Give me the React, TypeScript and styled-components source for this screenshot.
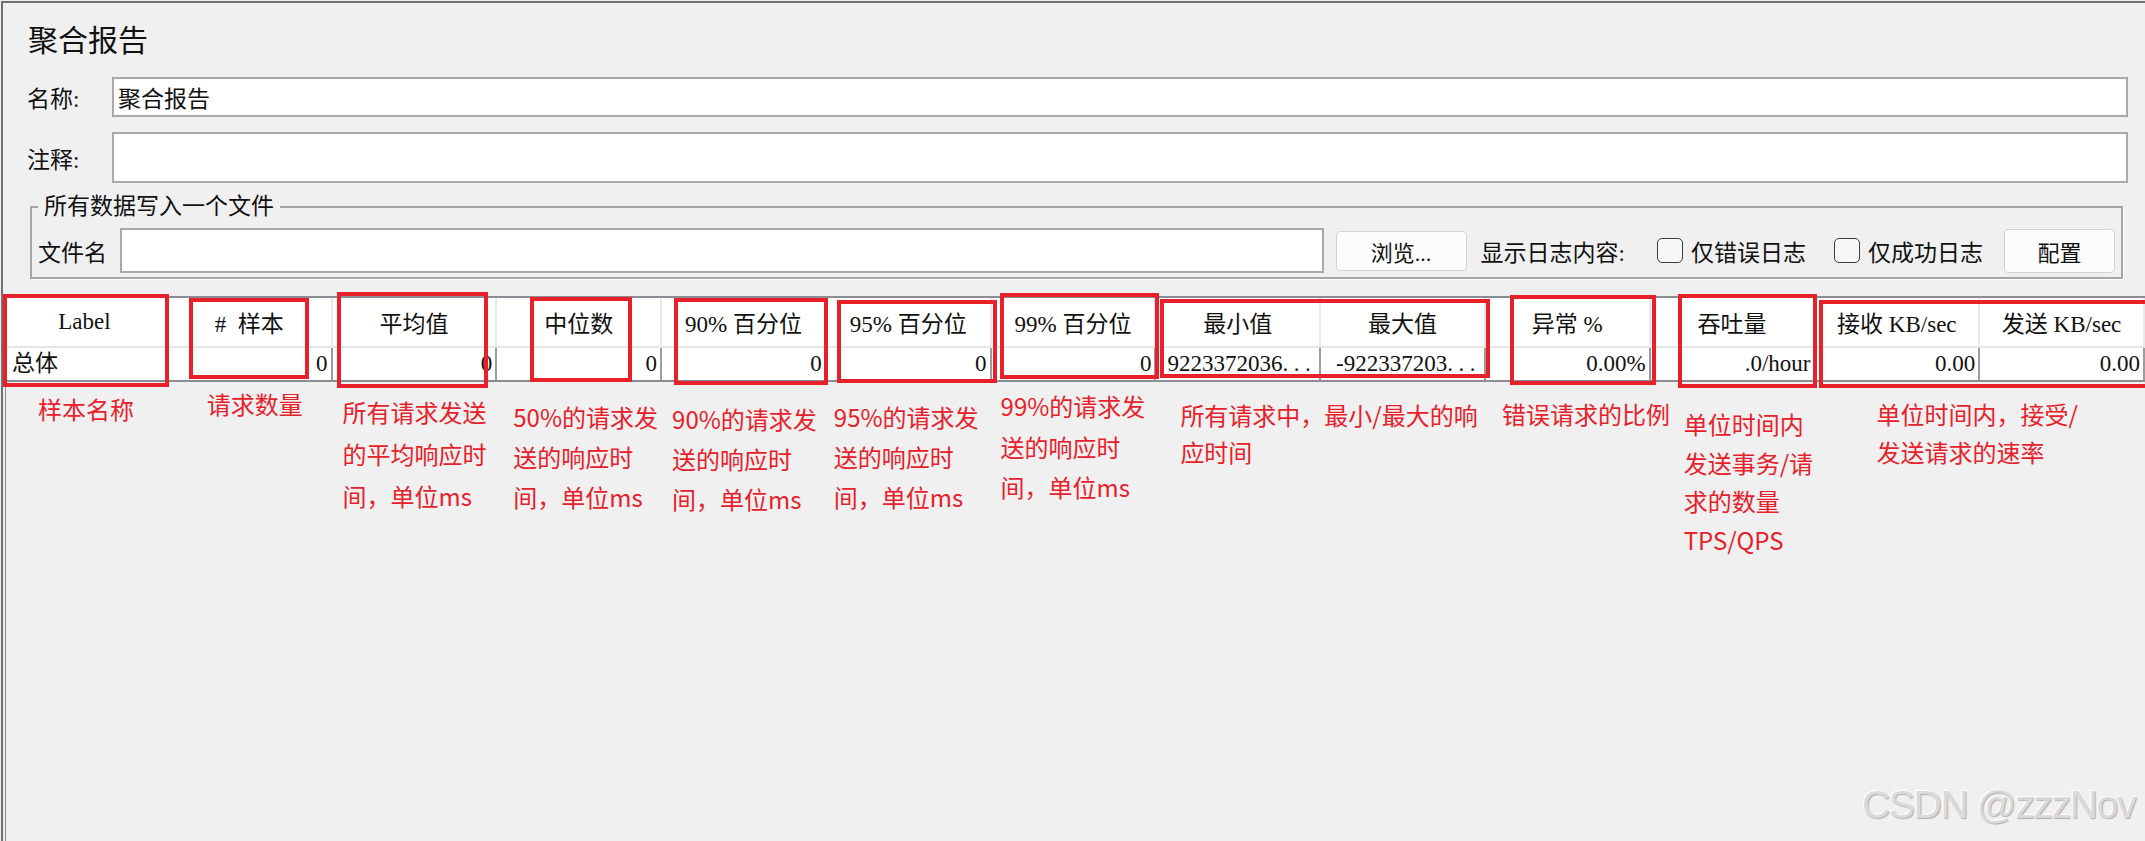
import React from 'react';
import styled, { createGlobalStyle } from 'styled-components';

const UI_FONT = `"Liberation Serif", "Noto Sans CJK SC", serif`;
const NOTE_FONT = `"Noto Sans CJK SC", "Noto Sans", sans-serif`;
const RED = '#e8202a';

const GlobalStyle = createGlobalStyle`
    html, body {
        margin: 0;
        padding: 0;
        background: #f0f0f0;
    }
    body {
        overflow: hidden;
    }
`

const Page = styled.div`
    position: relative;
    width: 2145px;
    height: 841px;
    padding: 1px 0 0 1px;
    box-sizing: border-box;
    background: #f0f0f0;
    overflow: hidden;
    font-family: ${UI_FONT};
    color: #111;
`

const Frame = styled.div`
    position: relative;
    display: flex;
    flex-direction: column;
    height: 100%;
    border-top: 2px solid #707070;
    border-left: 2px solid #707070;
`

const Panel = styled.div`
    padding: 17px 17px 17px 24px;
`

const Title = styled.div`
    height: 42px;
    line-height: 42px;
    font-size: 30px;
    padding-left: 1px;
`

const FieldRow = styled.div<{ $h: number; $mt: number }>`
    display: flex;
    align-items: center;
    height: ${p => p.$h}px;
    margin-top: ${p => p.$mt}px;
`

const FieldLabel = styled.div`
    width: 85px;
    flex-shrink: 0;
    font-size: 23px;
`

const TextBox = styled.div`
    flex: 1;
    align-self: stretch;
    display: flex;
    align-items: center;
    box-sizing: border-box;
    padding-left: 4px;
    background: #fff;
    border: 2px solid #a9a9ad;
    font-size: 23px;
`

const Group = styled.fieldset`
    margin: 12px 5px 0 3px;
    padding: 9px 6px 4px 6px;
    border: 2px solid #a6a6a6;
    box-shadow: 1px 1px 0 #fff;
    min-width: 0;
`

const GroupTitle = styled.legend`
    padding: 0 6px;
    font-size: 23px;
    line-height: 24px;
`

const GroupRow = styled.div`
    display: flex;
    align-items: center;
    height: 45px;
    font-size: 23px;
    white-space: nowrap;
`

const FileLabel = styled.span`
    margin-right: 13px;
`

const Button = styled.div<{ $w: number; $h: number; $ml: number }>`
    display: flex;
    align-items: center;
    justify-content: center;
    flex-shrink: 0;
    box-sizing: border-box;
    width: ${p => p.$w}px;
    height: ${p => p.$h}px;
    margin-left: ${p => p.$ml}px;
    background: #fcfcfc;
    border: 1px solid #d2d2d2;
    border-radius: 4px;
    font-size: 22px;
`

const ShowLabel = styled.span`
    margin-left: 14px;
`

const Check = styled.label<{ $ml: number }>`
    display: flex;
    align-items: center;
    gap: 8px;
    margin-left: ${p => p.$ml}px;
`

const CheckBox = styled.span`
    width: 26px;
    height: 25px;
    box-sizing: border-box;
    border: 1.5px solid #3c3c3c;
    border-radius: 5px;
    background: #f7f7f7;
`

const Table = styled.div`
    display: grid;
    grid-template-columns: repeat(13, minmax(0, 1fr));
    border-top: 2px solid #8a8d94;
    border-bottom: 2px solid #8a8d94;
    background: #fff;
`

const HeadCell = styled.div`
    display: flex;
    align-items: center;
    justify-content: center;
    height: 48px;
    border-right: 2px solid #e9e9e9;
    border-bottom: 2px solid #e6e6e6;
    font-size: 23px;
    white-space: pre;
    overflow: hidden;
`

const DataCell = styled.div<{ $left?: boolean }>`
    height: 32px;
    line-height: 32px;
    box-sizing: border-box;
    padding: ${p => (p.$left ? '0 0 0 9px' : '0 3px 0 0')};
    text-align: ${p => (p.$left ? 'left' : 'right')};
    border-right: 2px solid #9c9c9c;
    font-size: 23px;
    white-space: nowrap;
    overflow: hidden;
`

const Dots = styled.span`
    letter-spacing: 5.5px;
`

const Notes = styled.div`
    flex: 1;
    display: grid;
    grid-template-columns: repeat(13, minmax(0, 1fr));
    align-content: start;
    box-shadow: inset 2px 0 0 #f0f0f0, inset 3px 0 0 #8a8a8a;
    font-family: ${NOTE_FONT};
    font-size: 24px;
    color: ${RED};
`

const Note = styled.div<{ $col: number; $span?: number; $x: number; $y: number; $lh: number }>`
    grid-row: 1;
    grid-column: ${p => p.$col} / span ${p => p.$span ?? 1};
    align-self: start;
    padding-left: ${p => p.$x}px;
    margin-top: ${p => p.$y}px;
    line-height: ${p => p.$lh}px;
    white-space: nowrap;
`

const RedBox = styled.div`
    position: absolute;
    box-sizing: border-box;
    border: 4px solid ${RED};
    pointer-events: none;
`

const Watermark = styled.div`
    position: absolute;
    left: 1862px;
    top: 785px;
    font-family: "Liberation Sans", Arial, sans-serif;
    font-size: 39px;
    line-height: 39px;
    letter-spacing: -1.3px;
    color: #dadada;
    text-shadow: 1px 1px 1px rgba(0, 0, 0, 0.28), -1px -1px 0 #ffffff;
`

const headers = ['Label', '#  样本', '平均值', '中位数', '90% 百分位', '95% 百分位', '99% 百分位', '最小值', '最大值', '异常 %', '吞吐量', '接收 KB/sec', '发送 KB/sec'];
const values: React.ReactNode[] = [
    '总体', '0', '0', '0', '0', '0', '0',
    <>9223372036<Dots>...</Dots></>,
    <>-922337203<Dots>...</Dots></>,
    '0.00%', '.0/hour', '0.00', '0.00',
];

// annotation boxes, relative to the frame (origin at 3,3)
const boxes = [
    { l: 0, t: 291, w: 166, h: 93 },
    { l: 186, t: 295, w: 120, h: 81 },
    { l: 334, t: 289, w: 151, h: 96 },
    { l: 527, t: 294, w: 102, h: 85 },
    { l: 671, t: 295, w: 154, h: 87 },
    { l: 834, t: 297, w: 160, h: 83 },
    { l: 997, t: 290, w: 159, h: 86 },
    { l: 1157, t: 296, w: 330, h: 79 },
    { l: 1507, t: 292, w: 146, h: 90 },
    { l: 1675, t: 291, w: 139, h: 94 },
    { l: 1816, t: 297, w: 340, h: 88 },
];

const notes = [
    { col: 1, x: 35, y: 7, lh: 40, lines: ['样本名称'] },
    { col: 2, x: 39, y: 2, lh: 40, lines: ['请求数量'] },
    { col: 3, x: 10, y: 9, lh: 42, lines: ['所有请求发送', '的平均响应时', '间，单位ms'] },
    { col: 4, x: 16, y: 15, lh: 40, lines: ['50%的请求发', '送的响应时', '间，单位ms'] },
    { col: 5, x: 10, y: 17, lh: 40, lines: ['90%的请求发', '送的响应时', '间，单位ms'] },
    { col: 6, x: 7, y: 15, lh: 40, lines: ['95%的请求发', '送的响应时', '间，单位ms'] },
    { col: 7, x: 9, y: 4, lh: 40.5, lines: ['99%的请求发', '送的响应时', '间，单位ms'] },
    { col: 8, span: 2, x: 24, y: 14, lh: 37, lines: ['所有请求中，最小/最大的响', '应时间'] },
    { col: 10, x: 16, y: 12, lh: 40, lines: ['错误请求的比例'] },
    { col: 11, x: 33, y: 23, lh: 38.5, lines: ['单位时间内', '发送事务/请', '求的数量', 'TPS/QPS'] },
    { col: 12, span: 2, x: 61, y: 13, lh: 38, lines: ['单位时间内，接受/', '发送请求的速率'] },
];

function App() {
    return (
        <Page>
            <GlobalStyle />
            <Frame>
                <Panel>
                    <Title>聚合报告</Title>
                    <FieldRow $h={40} $mt={15}>
                        <FieldLabel>名称:</FieldLabel>
                        <TextBox>聚合报告</TextBox>
                    </FieldRow>
                    <FieldRow $h={51} $mt={15}>
                        <FieldLabel>注释:</FieldLabel>
                        <TextBox />
                    </FieldRow>
                    <Group>
                        <GroupTitle>所有数据写入一个文件</GroupTitle>
                        <GroupRow>
                            <FileLabel>文件名</FileLabel>
                            <TextBox />
                            <Button $w={131} $h={40} $ml={12}>浏览...</Button>
                            <ShowLabel>显示日志内容:</ShowLabel>
                            <Check $ml={32}><CheckBox />仅错误日志</Check>
                            <Check $ml={28}><CheckBox />仅成功日志</Check>
                            <Button $w={111} $h={44} $ml={21}>配置</Button>
                        </GroupRow>
                    </Group>
                </Panel>

                <Table>
                    {headers.map(h => <HeadCell key={h}>{h}</HeadCell>)}
                    {values.map((v, i) => <DataCell key={i} $left={i === 0}>{v}</DataCell>)}
                </Table>

                <Notes>
                    {notes.map((n, i) => (
                        <Note key={i} $col={n.col} $span={n.span} $x={n.x} $y={n.y} $lh={n.lh}>
                            {n.lines.map((l, j) => <div key={j}>{l}</div>)}
                        </Note>
                    ))}
                </Notes>

                {boxes.map((b, i) => (
                    <RedBox key={i} style={{ left: b.l, top: b.t, width: b.w, height: b.h }} />
                ))}
            </Frame>
            <Watermark>CSDN @zzzNov</Watermark>
        </Page>
    );
}

export default App;
